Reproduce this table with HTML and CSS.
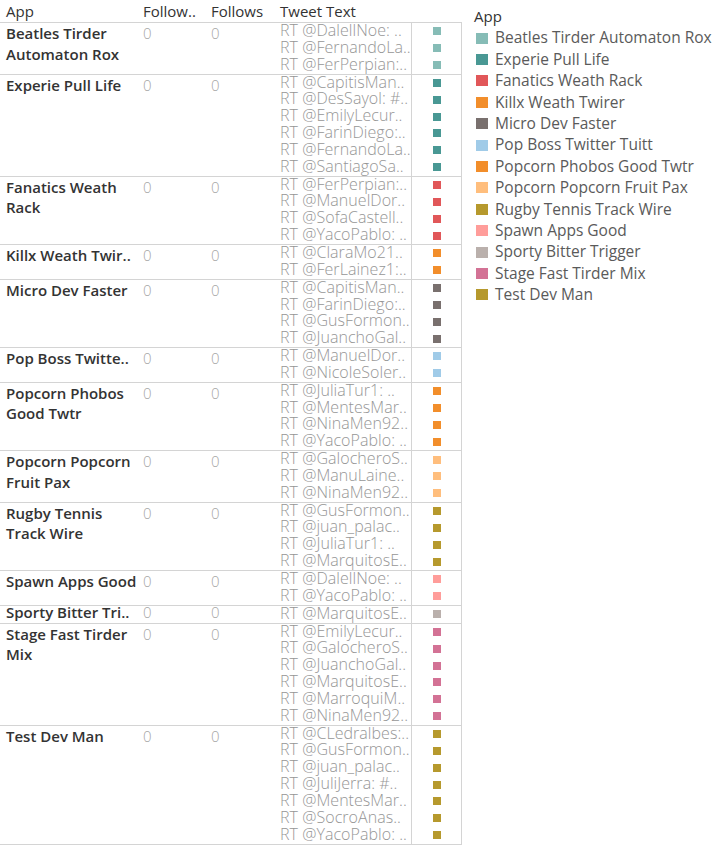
FILE: index.html
```html
<!DOCTYPE html>
<html>
<head>
<meta charset="utf-8">
<link rel="stylesheet" href="styles.css">
</head>
<body>
<div class="page">
  <div class="table">
    <div class="thead">
      <div class="hc c1">App</div>
      <div class="hc c2">Follow..</div>
      <div class="hc c3">Follows</div>
      <div class="hc c4">Tweet Text</div>
      <div class="hc c5"></div>
    </div>

    <div class="group">
      <div class="app">Beatles Tirder Automaton Rox</div>
      <div class="num c2">0</div>
      <div class="num c3">0</div>
      <div class="tweets">
        <div class="tl"><span class="tt">RT @DalellNoe: ..</span><span class="sw"><i class="sq beatles"></i></span></div>
        <div class="tl"><span class="tt">RT @FernandoLa..</span><span class="sw"><i class="sq beatles"></i></span></div>
        <div class="tl"><span class="tt">RT @FerPerpian:..</span><span class="sw"><i class="sq beatles"></i></span></div>
      </div>
    </div>

    <div class="group">
      <div class="app">Experie Pull Life</div>
      <div class="num c2">0</div>
      <div class="num c3">0</div>
      <div class="tweets">
        <div class="tl"><span class="tt">RT @CapitisMan..</span><span class="sw"><i class="sq experie"></i></span></div>
        <div class="tl"><span class="tt">RT @DesSayol: #..</span><span class="sw"><i class="sq experie"></i></span></div>
        <div class="tl"><span class="tt">RT @EmilyLecur..</span><span class="sw"><i class="sq experie"></i></span></div>
        <div class="tl"><span class="tt">RT @FarinDiego:..</span><span class="sw"><i class="sq experie"></i></span></div>
        <div class="tl"><span class="tt">RT @FernandoLa..</span><span class="sw"><i class="sq experie"></i></span></div>
        <div class="tl"><span class="tt">RT @SantiagoSa..</span><span class="sw"><i class="sq experie"></i></span></div>
      </div>
    </div>

    <div class="group">
      <div class="app">Fanatics Weath Rack</div>
      <div class="num c2">0</div>
      <div class="num c3">0</div>
      <div class="tweets">
        <div class="tl"><span class="tt">RT @FerPerpian:..</span><span class="sw"><i class="sq fanatics"></i></span></div>
        <div class="tl"><span class="tt">RT @ManuelDor..</span><span class="sw"><i class="sq fanatics"></i></span></div>
        <div class="tl"><span class="tt">RT @SofaCastell..</span><span class="sw"><i class="sq fanatics"></i></span></div>
        <div class="tl"><span class="tt">RT @YacoPablo: ..</span><span class="sw"><i class="sq fanatics"></i></span></div>
      </div>
    </div>

    <div class="group">
      <div class="app one">Killx Weath Twir..</div>
      <div class="num c2">0</div>
      <div class="num c3">0</div>
      <div class="tweets">
        <div class="tl"><span class="tt">RT @ClaraMo21..</span><span class="sw"><i class="sq killx"></i></span></div>
        <div class="tl"><span class="tt">RT @FerLainez1:..</span><span class="sw"><i class="sq killx"></i></span></div>
      </div>
    </div>

    <div class="group">
      <div class="app">Micro Dev Faster</div>
      <div class="num c2">0</div>
      <div class="num c3">0</div>
      <div class="tweets">
        <div class="tl"><span class="tt">RT @CapitisMan..</span><span class="sw"><i class="sq micro"></i></span></div>
        <div class="tl"><span class="tt">RT @FarinDiego:..</span><span class="sw"><i class="sq micro"></i></span></div>
        <div class="tl"><span class="tt">RT @GusFormon..</span><span class="sw"><i class="sq micro"></i></span></div>
        <div class="tl"><span class="tt">RT @JuanchoGal..</span><span class="sw"><i class="sq micro"></i></span></div>
      </div>
    </div>

    <div class="group">
      <div class="app one">Pop Boss Twitte..</div>
      <div class="num c2">0</div>
      <div class="num c3">0</div>
      <div class="tweets">
        <div class="tl"><span class="tt">RT @ManuelDor..</span><span class="sw"><i class="sq popboss"></i></span></div>
        <div class="tl"><span class="tt">RT @NicoleSoler..</span><span class="sw"><i class="sq popboss"></i></span></div>
      </div>
    </div>

    <div class="group">
      <div class="app">Popcorn Phobos Good Twtr</div>
      <div class="num c2">0</div>
      <div class="num c3">0</div>
      <div class="tweets">
        <div class="tl"><span class="tt">RT @JuliaTur1: ..</span><span class="sw"><i class="sq phobos"></i></span></div>
        <div class="tl"><span class="tt">RT @MentesMar..</span><span class="sw"><i class="sq phobos"></i></span></div>
        <div class="tl"><span class="tt">RT @NinaMen92..</span><span class="sw"><i class="sq phobos"></i></span></div>
        <div class="tl"><span class="tt">RT @YacoPablo: ..</span><span class="sw"><i class="sq phobos"></i></span></div>
      </div>
    </div>

    <div class="group">
      <div class="app">Popcorn Popcorn Fruit Pax</div>
      <div class="num c2">0</div>
      <div class="num c3">0</div>
      <div class="tweets">
        <div class="tl"><span class="tt">RT @GalocheroS..</span><span class="sw"><i class="sq fruit"></i></span></div>
        <div class="tl"><span class="tt">RT @ManuLaine..</span><span class="sw"><i class="sq fruit"></i></span></div>
        <div class="tl"><span class="tt">RT @NinaMen92..</span><span class="sw"><i class="sq fruit"></i></span></div>
      </div>
    </div>

    <div class="group">
      <div class="app">Rugby Tennis Track Wire</div>
      <div class="num c2">0</div>
      <div class="num c3">0</div>
      <div class="tweets">
        <div class="tl"><span class="tt">RT @GusFormon..</span><span class="sw"><i class="sq rugby"></i></span></div>
        <div class="tl"><span class="tt">RT @juan_palac..</span><span class="sw"><i class="sq rugby"></i></span></div>
        <div class="tl"><span class="tt">RT @JuliaTur1: ..</span><span class="sw"><i class="sq rugby"></i></span></div>
        <div class="tl"><span class="tt">RT @MarquitosE..</span><span class="sw"><i class="sq rugby"></i></span></div>
      </div>
    </div>

    <div class="group">
      <div class="app one">Spawn Apps Good</div>
      <div class="num c2">0</div>
      <div class="num c3">0</div>
      <div class="tweets">
        <div class="tl"><span class="tt">RT @DalellNoe: ..</span><span class="sw"><i class="sq spawn"></i></span></div>
        <div class="tl"><span class="tt">RT @YacoPablo: ..</span><span class="sw"><i class="sq spawn"></i></span></div>
      </div>
    </div>

    <div class="group single">
      <div class="app one">Sporty Bitter Tri..</div>
      <div class="num c2">0</div>
      <div class="num c3">0</div>
      <div class="tweets">
        <div class="tl"><span class="tt">RT @MarquitosE..</span><span class="sw"><i class="sq sporty"></i></span></div>
      </div>
    </div>

    <div class="group">
      <div class="app">Stage Fast Tirder Mix</div>
      <div class="num c2">0</div>
      <div class="num c3">0</div>
      <div class="tweets">
        <div class="tl"><span class="tt">RT @EmilyLecur..</span><span class="sw"><i class="sq stage"></i></span></div>
        <div class="tl"><span class="tt">RT @GalocheroS..</span><span class="sw"><i class="sq stage"></i></span></div>
        <div class="tl"><span class="tt">RT @JuanchoGal..</span><span class="sw"><i class="sq stage"></i></span></div>
        <div class="tl"><span class="tt">RT @MarquitosE..</span><span class="sw"><i class="sq stage"></i></span></div>
        <div class="tl"><span class="tt">RT @MarroquiM..</span><span class="sw"><i class="sq stage"></i></span></div>
        <div class="tl"><span class="tt">RT @NinaMen92..</span><span class="sw"><i class="sq stage"></i></span></div>
      </div>
    </div>

    <div class="group">
      <div class="app">Test Dev Man</div>
      <div class="num c2">0</div>
      <div class="num c3">0</div>
      <div class="tweets">
        <div class="tl"><span class="tt">RT @CLedralbes:..</span><span class="sw"><i class="sq test"></i></span></div>
        <div class="tl"><span class="tt">RT @GusFormon..</span><span class="sw"><i class="sq test"></i></span></div>
        <div class="tl"><span class="tt">RT @juan_palac..</span><span class="sw"><i class="sq test"></i></span></div>
        <div class="tl"><span class="tt">RT @JuliJerra: #..</span><span class="sw"><i class="sq test"></i></span></div>
        <div class="tl"><span class="tt">RT @MentesMar..</span><span class="sw"><i class="sq test"></i></span></div>
        <div class="tl"><span class="tt">RT @SocroAnas..</span><span class="sw"><i class="sq test"></i></span></div>
        <div class="tl"><span class="tt">RT @YacoPablo: ..</span><span class="sw"><i class="sq test"></i></span></div>
      </div>
    </div>
  </div>

  <div class="legend">
    <div class="lh">App</div>
    <div class="li"><i class="lsq beatles"></i><span>Beatles Tirder Automaton Rox</span></div>
    <div class="li"><i class="lsq experie"></i><span>Experie Pull Life</span></div>
    <div class="li"><i class="lsq fanatics"></i><span>Fanatics Weath Rack</span></div>
    <div class="li"><i class="lsq killx"></i><span>Killx Weath Twirer</span></div>
    <div class="li"><i class="lsq micro"></i><span>Micro Dev Faster</span></div>
    <div class="li"><i class="lsq popboss"></i><span>Pop Boss Twitter Tuitt</span></div>
    <div class="li"><i class="lsq phobos"></i><span>Popcorn Phobos Good Twtr</span></div>
    <div class="li"><i class="lsq fruit"></i><span>Popcorn Popcorn Fruit Pax</span></div>
    <div class="li"><i class="lsq rugby"></i><span>Rugby Tennis Track Wire</span></div>
    <div class="li"><i class="lsq spawn"></i><span>Spawn Apps Good</span></div>
    <div class="li"><i class="lsq sporty"></i><span>Sporty Bitter Trigger</span></div>
    <div class="li"><i class="lsq stage"></i><span>Stage Fast Tirder Mix</span></div>
    <div class="li"><i class="lsq test"></i><span>Test Dev Man</span></div>
  </div>
</div>
</body>
</html>
```
FILE: styles.css
```css
html, body {
  margin: 0;
  padding: 0;
  background: #ffffff;
}
body {
  font-family: "Open Sans", "Noto Sans", "DejaVu Sans", sans-serif;
  font-size: 15px;
  color: #333333;
}
.page {
  display: flex;
  align-items: flex-start;
}
.table {
  width: 462px;
  flex: none;
}
.thead,
.group {
  display: grid;
  grid-template-columns: 137px 69px 69px 187px;
}
.thead {
  grid-template-columns: 137px 69px 69px 136px 51px;
  height: 22px;
  line-height: 22px;
  border-bottom: 1px solid #d4d4d4;
  box-sizing: content-box;
}
.hc {
  white-space: nowrap;
}
.c1 { padding-left: 6px; }
.c2 { padding-left: 6px; }
.c3 { padding-left: 5px; }
.c4 { padding-left: 5px; }
.c5 {
  border-left: 1px solid #d4d4d4;
  border-right: 1px solid #d4d4d4;
  height: 0;
}
.group {
  border-bottom: 1px solid #d4d4d4;
}
.app,
.num {
  height: 0;
  min-height: 0;
  overflow: visible;
  align-self: start;
}
.app {
  padding-left: 6px;
  padding-right: 4px;
  font-weight: 600;
  line-height: 20.5px;
  color: #333333;
}
.app.one {
  white-space: nowrap;
}
.num {
  line-height: 20.5px;
  color: #a6a6a6;
  font-weight: 300;
}
.single .app,
.single .num {
  line-height: 13px;
}
.tweets {
  display: flex;
  flex-direction: column;
}
.tl {
  display: grid;
  grid-template-columns: 136px 51px;
  height: 16.85px;
}
.tt {
  padding-left: 5px;
  white-space: nowrap;
  color: #969696;
  font-weight: 300;
  font-size: 16px;
  line-height: 14px;
  letter-spacing: 0.05px;
}
.sw {
  border-left: 1px solid #d4d4d4;
  border-right: 1px solid #d4d4d4;
  display: flex;
  justify-content: center;
  align-items: center;
}
.sq {
  display: block;
  width: 8px;
  height: 8px;
}
.legend {
  margin-left: 12px;
  padding-top: 6px;
}
.lh {
  line-height: 21.4px;
  color: #333333;
}
.li {
  display: flex;
  align-items: center;
  height: 21.4px;
  line-height: 21.4px;
  color: #5a5a5a;
  font-size: 15.5px;
  white-space: nowrap;
}
.lsq {
  display: block;
  width: 12px;
  height: 11px;
  margin-left: 2px;
  margin-right: 7px;
}
.beatles { background: #86bcb6; }
.experie { background: #499894; }
.fanatics { background: #e15759; }
.killx { background: #f28e2b; }
.micro { background: #79706e; }
.popboss { background: #a0cbe8; }
.phobos { background: #f28e2b; }
.fruit { background: #ffbe7d; }
.rugby { background: #b6992d; }
.spawn { background: #ff9d9a; }
.sporty { background: #bab0ac; }
.stage { background: #d37295; }
.test { background: #b6992d; }
```
